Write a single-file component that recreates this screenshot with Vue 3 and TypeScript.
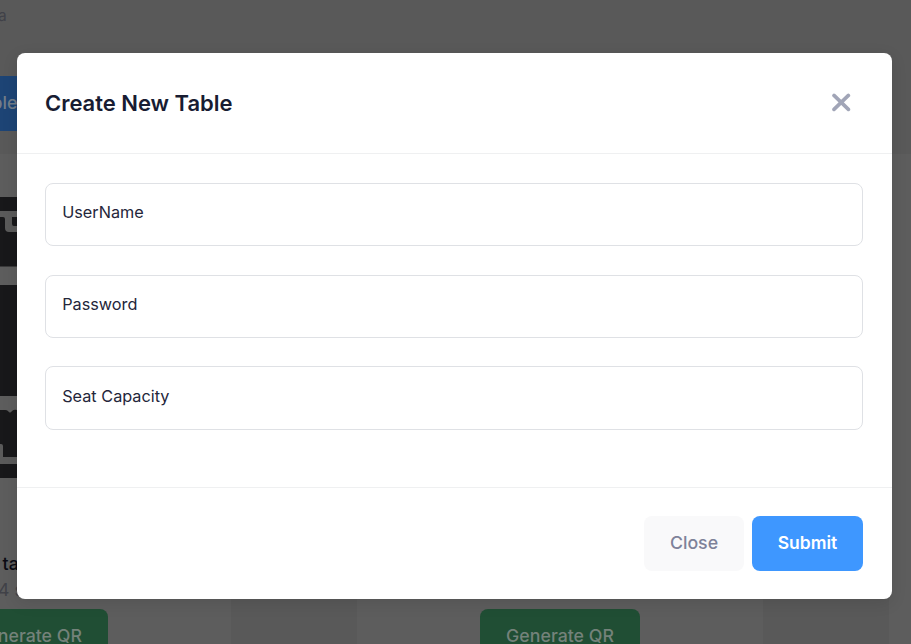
<script setup lang="ts">
import { ref } from 'vue'

interface Field {
  id: string
  label: string
}

const fields: Field[] = [
  { id: 'username', label: 'UserName' },
  { id: 'password', label: 'Password' },
  { id: 'capacity', label: 'Seat Capacity' },
]

const cards = [
  { id: 1, title: 'ta', seats: '4 s', qr: true, action: 'Generate QR' },
  { id: 2, title: '', seats: '', qr: false, action: 'Generate QR' },
  { id: 3, title: '', seats: '', qr: false, action: '' },
]

const open = ref(true)
</script>

<template>
  <div class="page">
    <header class="toolbar">
      <div class="crumb">a</div>
      <div class="tab">ble</div>
    </header>
    <main class="cards">
      <article v-for="card in cards" :key="card.id" class="card">
        <div class="code">
          <svg v-if="card.qr" width="20" height="283" viewBox="0 0 20 283">
            <path fill="#18181a" d="M0 0H20V69.500H0ZM0 88H20V199H0ZM0 213H5Q7 213 8 214Q10 217 12 214Q14 212 17 213H20V281H0Z" />
            <path fill="#5a5a5a" d="M0 14H20V20H12V27Q12 29 14 29H20V35H9Q5 35 5 31V22Q5 20 3 20H0ZM0 247H1Q3 247 3 249V260H20V267H0Z" />
          </svg>
        </div>
        <div class="name">{{ card.title }}</div>
        <div class="seats">{{ card.seats }}</div>
        <div v-if="card.action" class="generate">{{ card.action }}</div>
      </article>
    </main>

    <div v-if="open" class="overlay">
      <section class="modal" role="dialog" aria-modal="true">
        <div class="head">
          <h2>Create New Table</h2>
          <button class="dismiss" aria-label="Close" @click="open = false">
            <svg width="20" height="20" viewBox="0 0 20 20">
              <path d="M3 2.400L17.400 16.400M17.400 2.400L3 16.400" fill="none" stroke="#a1a5b7" stroke-width="3.600" stroke-linecap="round" />
            </svg>
          </button>
        </div>
        <form class="body" @submit.prevent>
          <div v-for="field in fields" :key="field.id" class="field">{{ field.label }}</div>
        </form>
        <div class="foot">
          <button class="btn light" @click="open = false">Close</button>
          <button class="btn primary">Submit</button>
        </div>
      </section>
    </div>
  </div>
</template>

<style>
body {
  margin: 0;
  overflow: hidden;
}
</style>

<style scoped>
.page {
  position: relative;
  width: 911px;
  height: 644px;
  overflow: hidden;
  background: #595959;
  font-family: Inter, "Liberation Sans", sans-serif;
}

.toolbar {
  box-sizing: border-box;
  height: 154px;
  padding-top: 5px;
}

.crumb {
  height: 71px;
  margin-left: -2px;
  font-size: 15.500px;
  line-height: 22px;
  color: #404148;
}

.tab {
  width: 17px;
  height: 55px;
  background: #1d4475;
  color: #727d89;
  font-size: 17.750px;
  font-weight: 500;
  line-height: 54px;
  text-indent: -8.500px;
}

.cards {
  display: flex;
  gap: 126px;
  height: 490px;
  margin-left: -175px;
}

.card {
  display: flex;
  flex: 0 0 406px;
  flex-direction: column;
  align-items: center;
  background: #5d5d5d;
}

.card > div {
  flex-shrink: 0;
}

.code {
  box-sizing: border-box;
  width: 56px;
  height: 395px;
  padding-top: 43px;
}

.code svg {
  display: block;
}

.name {
  width: 51px;
  height: 29px;
  font-size: 17.750px;
  font-weight: 500;
  line-height: 29px;
  color: #0b0b14;
}

.seats {
  width: 60px;
  height: 31px;
  font-size: 17.750px;
  line-height: 24px;
  color: #414248;
}

.generate {
  width: 160px;
  height: 55px;
  border-radius: 8px;
  background: #204e34;
  color: #74827a;
  font-size: 17.750px;
  font-weight: 500;
  line-height: 54px;
  text-align: center;
}

.overlay {
  position: absolute;
  inset: 0;
  padding: 53px 19px 45px 17px;
}

.modal {
  display: flex;
  flex-direction: column;
  height: 546px;
  border-radius: 8px;
  background: #fff;
  box-shadow: 0 4px 16px rgba(0, 0, 0, 0.1);
}

.head {
  box-sizing: border-box;
  display: flex;
  align-items: center;
  justify-content: space-between;
  height: 101px;
  padding: 0 41px 0 28px;
  border-bottom: 1px solid #eff0f1;
}

h2 {
  margin: 0;
  color: #181c32;
  font-size: 22px;
  font-weight: 600;
  line-height: 30px;
  letter-spacing: -0.02px;
}

.dismiss {
  width: 20px;
  height: 20px;
  padding: 0;
  border: 0;
  background: none;
}

.dismiss svg {
  display: block;
}

.body {
  box-sizing: border-box;
  display: flex;
  flex-direction: column;
  gap: 28.500px;
  height: 333px;
  padding: 29px 29px 0 28px;
}

.field {
  box-sizing: border-box;
  flex: 0 0 63.200px;
  padding-left: 16.200px;
  border: 1px solid #dfe1e5;
  border-radius: 8px;
  color: #24263a;
  font-size: 16.250px;
  line-height: 57px;
}

.field:last-child {
  line-height: 58.500px;
}

.foot {
  box-sizing: border-box;
  display: flex;
  justify-content: flex-end;
  gap: 8px;
  height: 112px;
  padding: 28px 29px;
  border-top: 1px solid #eff0f1;
}

.btn {
  height: 55px;
  padding: 0 0 2px;
  border: 0;
  border-radius: 8px;
  font-family: inherit;
  font-size: 17.750px;
}

.light {
  width: 100px;
  background: #f9f9fa;
  color: #7e8299;
  font-weight: 500;
}

.primary {
  width: 111px;
  background: #3e97ff;
  color: #fff;
  font-size: 17.500px;
  font-weight: 600;
}
</style>
